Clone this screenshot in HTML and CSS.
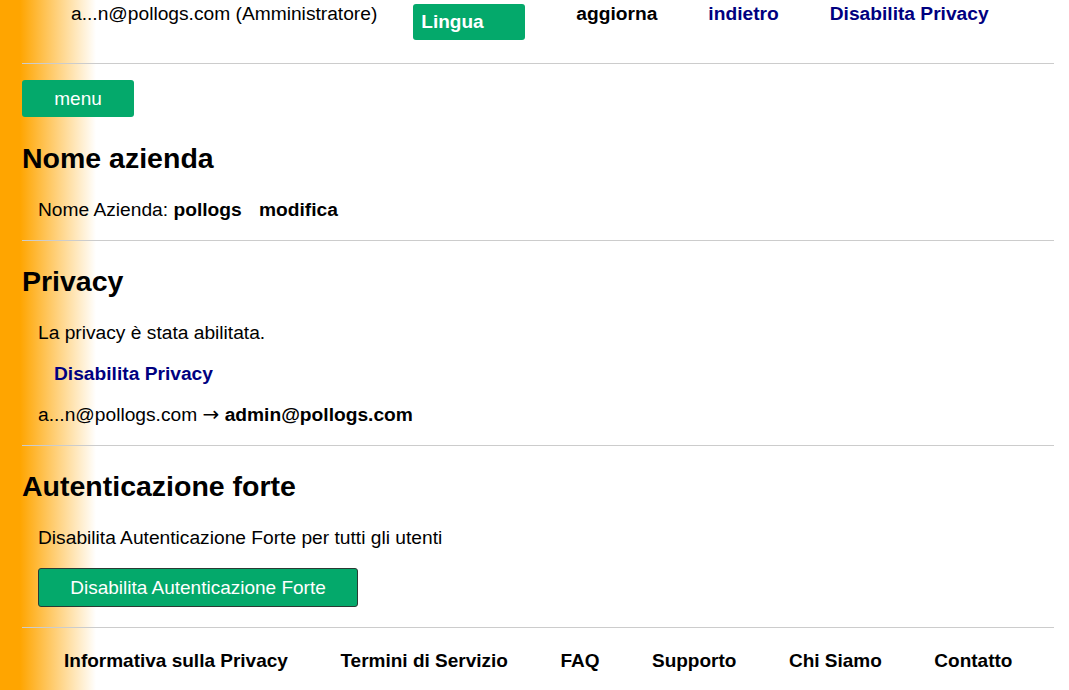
FILE: index.html
```html
<!DOCTYPE html>
<html lang="it">
<head>
	<meta charset="UTF-8">
	<meta name="viewport" content="width=device-width, initial-scale=1.0">
	<title>Impostazioni azienda</title>
	<link rel="stylesheet" href="styles.css">
</head>
<body>
<div class="page">
	<header class="topbar">
		<span class="user">a...n@pollogs.com (Amministratore)</span>
		<button class="btn-lang">Lingua</button>
		<a href="#" class="nav-link plain">aggiorna</a>
		<a href="#" class="nav-link">indietro</a>
		<a href="#" class="nav-link">Disabilita Privacy</a>
	</header>

	<!-- nome azienda -->
	<div class="section first">
		<button class="btn-menu">menu</button>
		<h2>Nome azienda</h2>
		<p class="line">Nome Azienda: <b>pollogs</b> <a href="#" class="edit">modifica</a></p>
	</div>

	<!-- privacy -->
	<div class="section">
		<h2>Privacy</h2>
		<p class="line">La privacy è stata abilitata.</p>
		<p class="line indent"><a href="#" class="nav-link">Disabilita Privacy</a></p>
		<p class="line">a...n@pollogs.com <span class="arrow">→</span> <b>admin@pollogs.com</b></p>
	</div>

	<!-- autenticazione forte -->
	<div class="section">
		<h2>Autenticazione forte</h2>
		<p class="line">Disabilita Autenticazione Forte per tutti gli utenti</p>
		<div class="line">
			<button class="btn-action">Disabilita Autenticazione Forte</button>
		</div>
	</div>

	<footer class="footer">
		<a href="#">Informativa sulla Privacy</a>
		<a href="#">Termini di Servizio</a>
		<a href="#">FAQ</a>
		<a href="#">Supporto</a>
		<a href="#">Chi Siamo</a>
		<a href="#">Contatto</a>
	</footer>
</div>
</body>
</html>
```

FILE: styles.css
```css
:root {
    --green: #04a96b;
    --navy: #000080;
    --rule: #cccccc;
    --orange: #ffa500;
}

* {
    margin: 0;
    padding: 0;
    box-sizing: border-box;
}

body {
    font-family: 'Liberation Sans', Arial, sans-serif;
    font-size: 19.2px;
    line-height: 21px;
    color: #000;
    background: linear-gradient(to right, var(--orange) 20px, #fff 96px);
    min-height: 100vh;
}

a {
    text-decoration: none;
    color: #000;
    font-weight: bold;
}

button {
    font-family: inherit;
    font-size: 19px;
    color: #fff;
    background: var(--green);
    border: none;
    border-radius: 3px;
    cursor: pointer;
}

.page {
    padding: 0 15px 0 22px;
}

.topbar {
    display: flex;
    align-items: flex-start;
    height: 64px;
    padding: 3px 0 0 49px;
    border-bottom: 1px solid var(--rule);
}

.btn-lang {
    width: 112px;
    height: 36px;
    margin: 1px 0 0 36px;
    padding-left: 8px;
    text-align: left;
    font-weight: bold;
}

.nav-link {
    color: var(--navy);
}

.topbar .nav-link {
    margin-left: 51px;
}

.topbar .plain {
    color: #000;
}

.section {
    border-top: 1px solid var(--rule);
    padding-bottom: 20px;
}

.section.first {
    border-top: none;
    padding-top: 16px;
}

.btn-menu {
    display: block;
    width: 112px;
    height: 37px;
    margin-bottom: 25px;
}

h2 {
    font-size: 28.5px;
    line-height: 32px;
    margin-top: 24px;
}

.first h2 {
    margin-top: 0;
}

.line {
    margin: 20px 0 0 16px;
}

h2 + .line {
    margin-top: 25px;
}

.indent {
    padding-left: 16px;
}

.edit {
    margin-left: 12px;
}

.arrow {
    display: inline-block;
    height: 21px;
    line-height: 21px;
    vertical-align: top;
    font-family: 'DejaVu Sans', sans-serif;
    font-size: 20px;
}

.btn-action {
    width: 320px;
    height: 39px;
    border: 1px solid #2a3a33;
}

.footer {
    display: flex;
    gap: 52.5px;
    border-top: 1px solid var(--rule);
    padding: 22px 0 20px 42px;
    font-size: 19px;
}
```
